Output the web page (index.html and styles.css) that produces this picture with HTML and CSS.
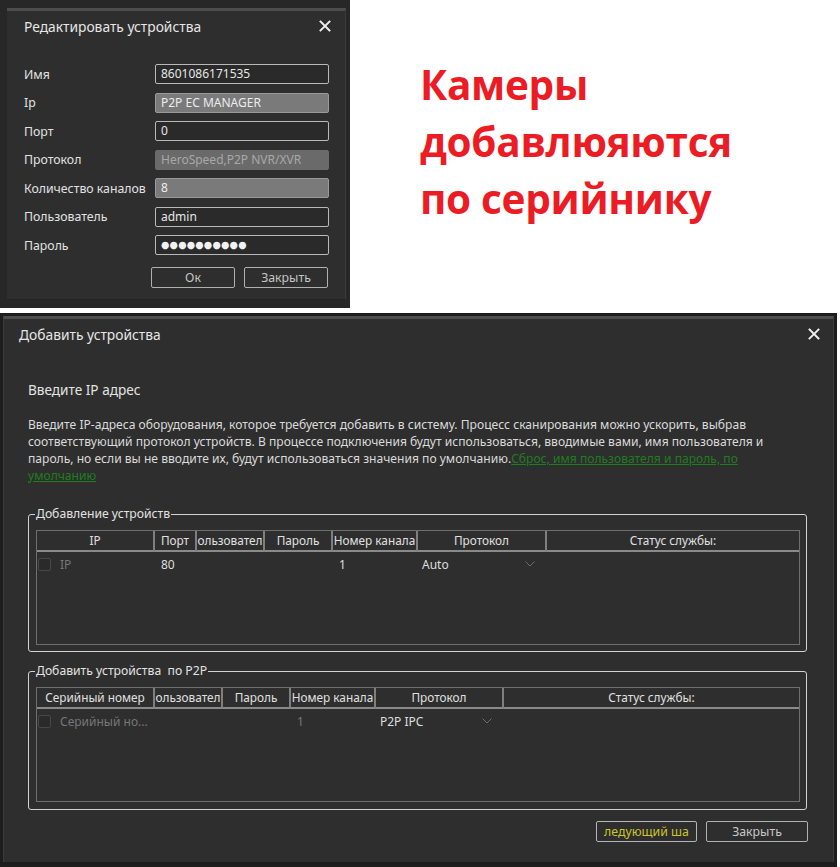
FILE: index.html
```html
<!DOCTYPE html>
<html lang="ru">
<head>
<meta charset="utf-8">
<title>Устройства</title>
<link rel="stylesheet" href="styles.css">
</head>
<body>
<div class="page">
  <div class="top">
    <div class="shot shot-edit">
      <div class="dlg dlg-edit">
        <div class="dlg-head">
          <span class="dlg-title">Редактировать устройства</span>
          <svg class="x" viewBox="0 0 12 12" width="12" height="12"><path d="M1.5 1.5L10.5 10.5M10.5 1.5L1.5 10.5"/></svg>
        </div>
        <div class="form">
          <span class="lbl">Имя</span><div class="inp">8601086171535</div>
          <span class="lbl">Ip</span><div class="inp inp-dis">P2P EC MANAGER</div>
          <span class="lbl">Порт</span><div class="inp">0</div>
          <span class="lbl">Протокол</span><div class="inp inp-ro">HeroSpeed,P2P NVR/XVR</div>
          <span class="lbl">Количество каналов</span><div class="inp inp-dis">8</div>
          <span class="lbl">Пользователь</span><div class="inp">admin</div>
          <span class="lbl">Пароль</span><div class="inp inp-pw">●●●●●●●●●●</div>
        </div>
        <div class="btns">
          <button class="btn">Ок</button>
          <button class="btn">Закрыть</button>
        </div>
      </div>
    </div>
    <div class="note">Камеры<br>добавлюяются<br>по серийнику</div>
  </div>

  <div class="shot shot-add">
    <div class="dlg dlg-add">
      <div class="dlg-head head-add">
        <span class="dlg-title">Добавить устройства</span>
        <svg class="x" viewBox="0 0 12 12" width="12" height="12"><path d="M1.5 1.5L10.5 10.5M10.5 1.5L1.5 10.5"/></svg>
      </div>
      <div class="body">
        <div class="sub">Введите IP адрес</div>
        <p class="desc">Введите IP-адреса оборудования, которое требуется добавить в систему. Процесс сканирования можно ускорить, выбрав<br>соответствующий протокол устройств. В процессе подключения будут использоваться, вводимые вами, имя пользователя и<br>пароль, но если вы не вводите их, будут использоваться значения по умолчанию.<a class="link" href="#">Сброс, имя пользователя и пароль, по<br>умолчанию</a></p>

        <fieldset class="group g1">
          <legend>Добавление устройств</legend>
          <div class="tbl t1">
            <div class="th">IP</div>
            <div class="th">Порт</div>
            <div class="th">ользовател</div>
            <div class="th">Пароль</div>
            <div class="th">Номер канала</div>
            <div class="th">Протокол</div>
            <div class="th th-last">Статус службы:</div>
            <div class="td td-first"><span class="chk"></span><span class="muted">IP</span></div>
            <div class="td">80</div>
            <div class="td"></div>
            <div class="td"></div>
            <div class="td">1</div>
            <div class="td td-sel">Auto<svg class="chev" viewBox="0 0 10 6" width="10" height="6"><path d="M0.5 0.5L5 5L9.5 0.5"/></svg></div>
            <div class="td"></div>
          </div>
        </fieldset>

        <fieldset class="group g2">
          <legend>Добавить устройства&nbsp; по P2P</legend>
          <div class="tbl t2">
            <div class="th">Серийный номер</div>
            <div class="th">ользовател</div>
            <div class="th">Пароль</div>
            <div class="th">Номер канала</div>
            <div class="th">Протокол</div>
            <div class="th th-last">Статус службы:</div>
            <div class="td td-first"><span class="chk"></span><span class="muted">Серийный но...</span></div>
            <div class="td"></div>
            <div class="td"></div>
            <div class="td muted">1</div>
            <div class="td td-sel">P2P IPC<svg class="chev" viewBox="0 0 10 6" width="10" height="6"><path d="M0.5 0.5L5 5L9.5 0.5"/></svg></div>
            <div class="td"></div>
          </div>
        </fieldset>

        <div class="actions">
          <button class="btn btn-next">ледующий ша</button>
          <button class="btn btn-close">Закрыть</button>
        </div>
      </div>
    </div>
  </div>
</div>
</body>
</html>
```

FILE: styles.css
```css
html, body {
  margin: 0;
  padding: 0;
  background: #ffffff;
}

.page {
  width: 840px;
  height: 867px;
  overflow: hidden;
  font-family: "Noto Sans", "Open Sans", sans-serif;
  color: #dcdcdc;
}

.top {
  display: flex;
  align-items: flex-start;
  height: 313px;
}

.shot {
  box-sizing: border-box;
}

.shot-edit {
  width: 350px;
  height: 308px;
  background: #272727;
  padding: 8px 0 0 7px;
}

.dlg {
  box-sizing: border-box;
  background: #2e2e2e;
  border-top: 3px solid #4d4d4d;
}

.dlg-edit {
  width: 339px;
  height: 292px;
  border-right: 1px solid #3a3a3a;
  border-bottom: 1px solid #232323;
}

.dlg-head {
  height: 30px;
  display: flex;
  align-items: center;
  justify-content: space-between;
  padding: 0 14px 0 17px;
}

.dlg-title {
  font-size: 13.8px;
  color: #e6e6e6;
}

.x {
  fill: none;
  stroke: #f0f0f0;
  stroke-width: 1.9;
  stroke-linecap: square;
}

.form {
  display: grid;
  grid-template-columns: 131px 174px;
  grid-auto-rows: 28.5px;
  align-items: center;
  padding: 19px 0 0 17px;
}

.lbl {
  font-size: 12.3px;
  color: #e2e2e2;
  white-space: nowrap;
}

.inp {
  box-sizing: border-box;
  height: 20px;
  border: 1px solid #b9b9b9;
  border-radius: 2px;
  background: #2a2a2a;
  font-size: 12px;
  line-height: 18px;
  padding-left: 5px;
  color: #e6e6e6;
  white-space: nowrap;
  overflow: hidden;
}

.inp-dis {
  background: #7a7a7a;
  border-color: #9a9a9a;
  color: #ececec;
}

.inp-ro {
  background: #6a6a6a;
  border-color: #6a6a6a;
  color: #a8a8a8;
}

.inp-pw {
  font-family: "DejaVu Sans", sans-serif;
  font-size: 9.6px;
  color: #f2f2f2;
  letter-spacing: 0.2px;
}

.btns {
  display: flex;
  justify-content: flex-end;
  gap: 9px;
  padding: 7.5px 17px 0 0;
}

.btn {
  box-sizing: border-box;
  width: 84px;
  height: 21px;
  margin: 0;
  padding: 0;
  background: transparent;
  border: 1px solid #b0b0b0;
  border-radius: 2px;
  font-family: "Noto Sans", "Open Sans", sans-serif;
  font-size: 12.3px;
  color: #c4c4c4;
  line-height: 19px;
}

.note {
  margin: 56px 0 0 70px;
  font-family: "Open Sans", "Noto Sans", sans-serif;
  font-weight: 700;
  font-size: 40.5px;
  line-height: 57px;
  color: #ec1c24;
  letter-spacing: -0.3px;
  white-space: nowrap;
}

/* bottom dialog */
.shot-add {
  width: 837px;
  height: 554px;
  background: #1d1d1d;
  padding: 3px 0 0 3px;
}

.dlg-add {
  width: 831px;
  height: 546px;
  border-right: 1px solid #3c3c3c;
  border-left: 1px solid #3a3a3a;
}

.head-add {
  padding: 0 13px 0 15px;
}

.body {
  padding: 0 25px 0 24px;
}

.sub {
  margin-top: 31px;
  font-size: 13.6px;
  line-height: 20px;
  color: #e4e4e4;
}

.desc {
  margin: 15.5px 0 0;
  font-size: 12.1px;
  line-height: 17px;
  color: #dadada;
  white-space: nowrap;
}

.link {
  color: #1e7d1e;
  text-decoration: underline;
}

.group {
  margin: 22.5px 1px 0 0;
  padding: 8px 6px 6px 7px;
  border: 1px solid #d2d2d2;
  border-radius: 3px;
  min-width: 0;
}

.g2 {
  margin-top: 11px;
  padding-bottom: 7px;
}

.group legend {
  padding: 0 1px;
  margin-left: -1px;
  font-size: 12.2px;
  line-height: 16px;
  color: #e2e2e2;
}

.tbl {
  display: grid;
  grid-template-rows: 21px 1fr;
  height: 115px;
  box-sizing: border-box;
  border: 1px solid #6e6e6e;
}

.t1 {
  grid-template-columns: 118px 42px 68px 68px 85px 129px 1fr;
}

.t2 {
  grid-template-columns: 118px 68px 68px 85px 128px 1fr;
}

.th {
  box-sizing: border-box;
  border-right: 2px solid #7f7f7f;
  border-bottom: 2px solid #8a8a8a;
  font-size: 11.8px;
  line-height: 19px;
  text-align: center;
  color: #e0e0e0;
  white-space: nowrap;
  overflow: hidden;
}

.th-last {
  border-right: none;
}

.td {
  display: flex;
  align-items: flex-start;
  padding: 5px 0 0 6px;
  font-size: 12px;
  line-height: 16px;
  color: #dedede;
  white-space: nowrap;
  overflow: hidden;
}

.td-first {
  padding-left: 1px;
  gap: 9px;
}

.td-sel {
  justify-content: space-between;
  padding: 5px 12px 0 4px;
}

.muted {
  color: #777777;
}

.chk {
  box-sizing: border-box;
  width: 13px;
  height: 13px;
  margin-top: 1px;
  border: 1px solid #484848;
  border-radius: 2px;
  background: #2a2a2a;
}

.chev {
  margin-top: 4px;
  fill: none;
  stroke: #6c6c6c;
  stroke-width: 1;
}

.actions {
  display: flex;
  justify-content: flex-end;
  gap: 9px;
  margin-top: 11px;
}

.btn-next {
  width: 101px;
  color: #cdc52a;
  border-color: #b5b5b5;
}

.btn-close {
  width: 102px;
  color: #c8c8c8;
}
```
